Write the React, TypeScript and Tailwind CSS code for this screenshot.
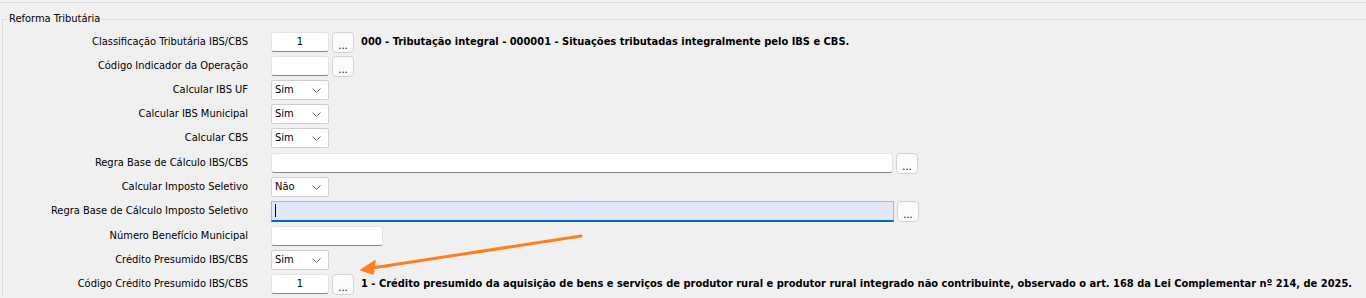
import type { ReactNode } from "react";

const FONT = "font-['Tahoma','DejaVu_Sans_Condensed','Liberation_Sans',sans-serif]";

function Label({ children }: { children: ReactNode }) {
  return <div className="w-[245px] shrink-0 text-right whitespace-nowrap">{children}</div>;
}

function TextBox({ value = "", w = "w-[58px]", center = false }: { value?: string; w?: string; center?: boolean }) {
  return (
    <div
      className={`${w} h-[20px] shrink-0 bg-white border border-[#e3e3e3] border-b-[#8a8a8a] rounded-[3px] flex items-center ${
        center ? "justify-center" : "px-[3px]"
      }`}
    >
      {value}
    </div>
  );
}

function Dots() {
  return (
    <div className="w-[22px] h-[21px] shrink-0 bg-[#fbfbfb] border border-[#d2d2d2] rounded-[4px] flex items-end justify-center pb-[1px] leading-none text-[11px]">
      ...
    </div>
  );
}

function Combo({ value }: { value: string }) {
  return (
    <div className="w-[58px] h-[20px] shrink-0 bg-white border border-[#cfcfcf] rounded-[2px] flex items-center justify-between pl-[3px] pr-[7px]">
      <span>{value}</span>
      <svg width="9" height="5" viewBox="0 0 9 5" className="text-[#6a6a6a]">
        <path d="M0.5 0.5 L4.5 4.5 L8.5 0.5" fill="none" stroke="currentColor" strokeWidth="1" />
      </svg>
    </div>
  );
}

function Row({ label, children, className = "" }: { label: string; children: ReactNode; className?: string }) {
  return (
    <div className={`flex items-center h-[24px] ${className}`}>
      <Label>{label}</Label>
      <div className="flex items-center gap-[3px] ml-[23px]">{children}</div>
    </div>
  );
}

export default function App() {
  return (
    <div className={`relative w-[1366px] h-[298px] overflow-hidden bg-[#f0f0f0] text-[11px] text-black ${FONT}`}>
      <div className="h-[3px] border-b border-[#dadada]" />
      <fieldset className="ml-[2px] mt-[9px] border-t border-l border-[#dcdcdc] pl-0 pt-[4px]">
        <legend className="ml-[4px] px-[2px] leading-[14px]">Reforma Tributária</legend>
        <Row label="Classificação Tributária IBS/CBS">
          <TextBox value="1" center />
          <Dots />
          <span className="ml-[4px] font-bold whitespace-nowrap">
            000 - Tributação integral - 000001 - Situações tributadas integralmente pelo IBS e CBS.
          </span>
        </Row>
        <Row label="Código Indicador da Operação">
          <TextBox />
          <Dots />
        </Row>
        <Row label="Calcular IBS UF">
          <Combo value="Sim" />
        </Row>
        <Row label="Calcular IBS Municipal">
          <Combo value="Sim" />
        </Row>
        <Row label="Calcular CBS">
          <Combo value="Sim" />
        </Row>
        <Row label="Regra Base de Cálculo IBS/CBS" className="mt-[1px]">
          <TextBox w="w-[622px]" />
          <Dots />
        </Row>
        <Row label="Calcular Imposto Seletivo">
          <Combo value="Não" />
        </Row>
        <Row label="Regra Base de Cálculo Imposto Seletivo">
          <div className="w-[623px] h-[21px] shrink-0 bg-[#e4e7f8] border border-[#9fb8d8] border-b-[2px] border-b-[#0067c0] flex items-center px-[3px]">
            <div className="w-px h-[13px] bg-black" />
          </div>
          <Dots />
        </Row>
        <Row label="Número Benefício Municipal" className="mt-[1px]">
          <TextBox w="w-[112px]" />
        </Row>
        <Row label="Crédito Presumido IBS/CBS">
          <Combo value="Sim" />
        </Row>
        <Row label="Código Crédito Presumido IBS/CBS">
          <TextBox value="1" center />
          <Dots />
          <span className="ml-[4px] font-bold whitespace-nowrap">
            1 - Crédito presumido da aquisição de bens e serviços de produtor rural e produtor rural integrado não contribuinte, observado o art. 168 da Lei Complementar nº 214, de 2025.
          </span>
        </Row>
      </fieldset>
      <svg className="absolute left-0 top-0 pointer-events-none" width="1366" height="298">
        <line x1="581" y1="236" x2="372" y2="268" stroke="#ff7f1f" strokeWidth="3" strokeLinecap="round" />
        <path d="M361 270 L375 261 L373 274 Z" fill="#ff7f1f" stroke="#ff7f1f" strokeWidth="1.5" strokeLinejoin="round" />
      </svg>
    </div>
  );
}
